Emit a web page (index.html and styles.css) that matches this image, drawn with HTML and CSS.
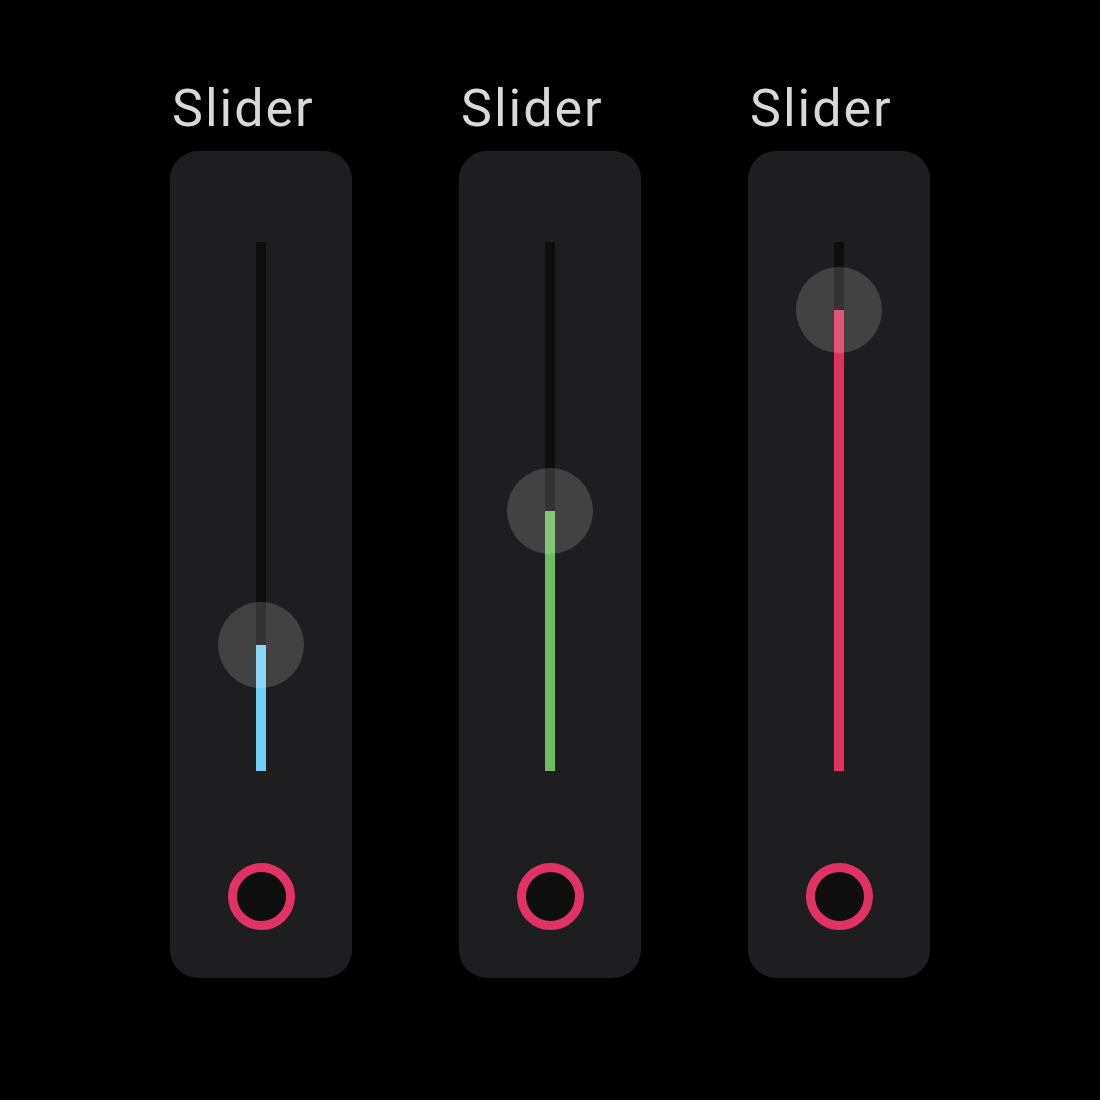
FILE: index.html
```html
<!DOCTYPE html>
<html lang="en">
<head>
<meta charset="utf-8">
<title>Sliders</title>
<link rel="stylesheet" href="styles.css">
</head>
<body>
  <main class="rack">
    <section class="channel">
      <h2 class="channel-label">Slider</h2>
      <div class="channel-card">
        <div class="track">
          <div class="fill fill-blue" style="height: 23.8%"></div>
          <div class="thumb" style="bottom: 23.8%"></div>
        </div>
        <button class="ring" type="button" aria-label="Toggle"></button>
      </div>
    </section>
    <section class="channel">
      <h2 class="channel-label">Slider</h2>
      <div class="channel-card">
        <div class="track">
          <div class="fill fill-green" style="height: 49.2%"></div>
          <div class="thumb" style="bottom: 49.2%"></div>
        </div>
        <button class="ring" type="button" aria-label="Toggle"></button>
      </div>
    </section>
    <section class="channel">
      <h2 class="channel-label">Slider</h2>
      <div class="channel-card">
        <div class="track">
          <div class="fill fill-pink" style="height: 87.1%"></div>
          <div class="thumb" style="bottom: 87.1%"></div>
        </div>
        <button class="ring" type="button" aria-label="Toggle"></button>
      </div>
    </section>
  </main>
</body>
</html>
```
FILE: styles.css
```css
html, body {
  margin: 0;
  padding: 0;
  background: #000;
}

body {
  width: 1100px;
  height: 1100px;
  font-family: Roboto, "Noto Sans", sans-serif;
}

.rack {
  display: flex;
  justify-content: center;
  gap: 107px;
  padding-top: 79px;
}

.channel {
  display: flex;
  flex-direction: column;
  width: 182px;
}

.channel-label {
  margin: 0 0 12px 2px;
  font-size: 52px;
  line-height: 60px;
  font-weight: 400;
  letter-spacing: 2px;
  color: #d9d9d9;
}

.channel-card {
  height: 827px;
  box-sizing: border-box;
  background: #1e1e20;
  border-radius: 28px;
  padding-top: 91px;
  display: flex;
  flex-direction: column;
  align-items: center;
}

.track {
  position: relative;
  width: 10px;
  height: 529px;
  background: #0e0e0e;
}

.fill {
  position: absolute;
  left: 0;
  right: 0;
  bottom: 0;
}

.fill-blue { background: #72cff7; }
.fill-green { background: #6cbd5e; }
.fill-pink { background: #e0325f; }

.thumb {
  position: absolute;
  left: 50%;
  width: 86px;
  height: 86px;
  margin-left: -43px;
  margin-bottom: -43px;
  border-radius: 50%;
  background: rgba(255, 255, 255, 0.16);
}

.ring {
  margin-top: 92px;
  width: 67px;
  height: 67px;
  box-sizing: border-box;
  padding: 0;
  border: 9px solid #e03264;
  border-radius: 50%;
  background: #0e0e0e;
}
```
